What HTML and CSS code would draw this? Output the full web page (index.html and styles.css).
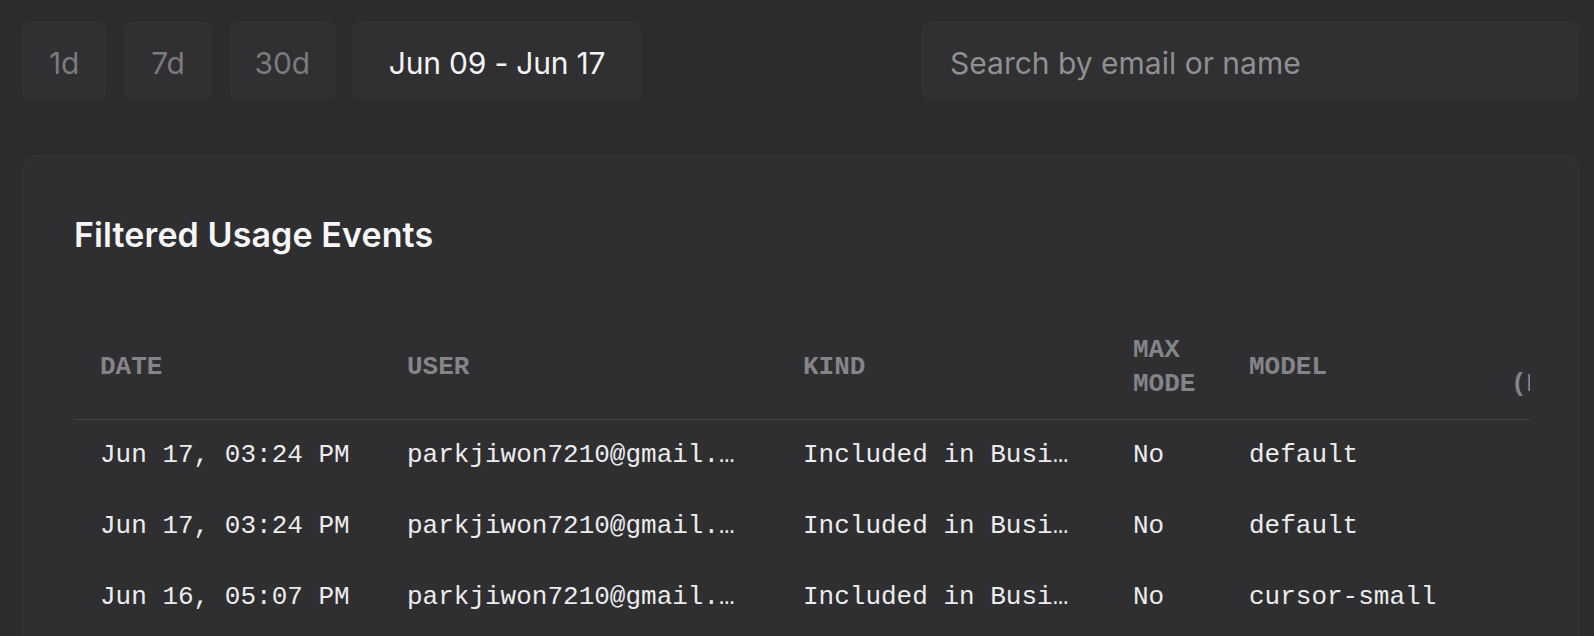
FILE: index.html
```html
<!DOCTYPE html>
<html lang="en">
<head>
<meta charset="utf-8">
<title>Usage</title>
<link rel="stylesheet" href="styles.css">
</head>
<body>
<div class="page">
  <div class="toolbar">
    <div class="ranges">
      <button class="chip">1d</button>
      <button class="chip">7d</button>
      <button class="chip">30d</button>
      <button class="chip chip-active">Jun 09 - Jun 17</button>
    </div>
    <input class="search" type="text" placeholder="Search by email or name">
  </div>

  <section class="card">
    <h2 class="card-title">Filtered Usage Events</h2>
    <div class="table-wrap">
      <table class="events">
        <colgroup>
          <col class="c-date"><col class="c-user"><col class="c-kind"><col class="c-max"><col class="c-model"><col class="c-cost">
        </colgroup>
        <thead>
          <tr>
            <th>Date</th>
            <th>User</th>
            <th>Kind</th>
            <th>Max Mode</th>
            <th>Model</th>
            <th class="num">Cost (Requests)</th>
          </tr>
        </thead>
        <tbody>
          <tr>
            <td>Jun 17, 03:24 PM</td>
            <td><span class="trunc">parkjiwon7210@gmail.com</span></td>
            <td><span class="trunc">Included in Business</span></td>
            <td>No</td>
            <td>default</td>
            <td class="num">1</td>
          </tr>
          <tr>
            <td>Jun 17, 03:24 PM</td>
            <td><span class="trunc">parkjiwon7210@gmail.com</span></td>
            <td><span class="trunc">Included in Business</span></td>
            <td>No</td>
            <td>default</td>
            <td class="num">1</td>
          </tr>
          <tr>
            <td>Jun 16, 05:07 PM</td>
            <td><span class="trunc">parkjiwon7210@gmail.com</span></td>
            <td><span class="trunc">Included in Business</span></td>
            <td>No</td>
            <td>cursor-small</td>
            <td class="num">0</td>
          </tr>
        </tbody>
      </table>
    </div>
  </section>
</div>
</body>
</html>
```
FILE: styles.css
```css
html, body {
  margin: 0;
  padding: 0;
  background: #2c2b2d;
  height: 100%;
  overflow: hidden;
}

body {
  font-family: Inter, "Liberation Sans", sans-serif;
  color: #f2f2f3;
}

.page {
  padding: 22px 15px 0 22px;
}

.toolbar {
  display: flex;
  justify-content: space-between;
  align-items: center;
  height: 78px;
}

.ranges {
  display: flex;
  gap: 18px;
  height: 100%;
}

.chip {
  height: 78px;
  padding: 3px 26px 0;
  background: #302f31;
  border: 1px solid #343335;
  border-radius: 8px;
  color: #7b7a7e;
  font-family: Inter, "Liberation Sans", sans-serif;
  font-size: 30px;
  font-weight: 400;
  letter-spacing: -0.2px;
  cursor: pointer;
}

.chip:nth-child(3) {
  padding: 3px 24px 0;
}

.chip-active {
  padding: 3px 35px 0;
  color: #f4f4f5;
}

.search {
  box-sizing: border-box;
  width: 657px;
  height: 78px;
  padding: 3px 27px 0;
  background: #302f31;
  border: 1px solid #343335;
  border-radius: 8px;
  color: #f4f4f5;
  font-family: Inter, "Liberation Sans", sans-serif;
  font-size: 30px;
  outline: none;
}

.search::placeholder {
  color: #908f93;
}

.card {
  margin-top: 55px;
  padding: 52px 48px 0 51px;
  height: 600px;
  background: #2f2e30;
  border: 1px solid #343335;
  border-radius: 14px;
}

.card-title {
  margin: 0;
  font-size: 34px;
  line-height: 54px;
  font-weight: 600;
  color: #f6f6f7;
  letter-spacing: 0.1px;
}

.table-wrap {
  margin-top: 53px;
  overflow: hidden;
}

.events {
  table-layout: fixed;
  border-collapse: collapse;
  width: 1629px;
  font-family: "Liberation Mono", "DejaVu Sans Mono", monospace;
  font-size: 26px;
}

.c-date { width: 307px; }
.c-user { width: 396px; }
.c-kind { width: 330px; }
.c-max { width: 116px; }
.c-model { width: 268px; }
.c-cost { width: 212px; }

.events th {
  padding: 18px 30px 18px 26px;
  line-height: 34px;
  text-align: left;
  font-weight: 700;
  text-transform: uppercase;
  color: #858488;
  vertical-align: middle;
  border-bottom: 1px solid #434245;
}

.events th.num {
  padding-left: 20px;
  padding-right: 36px;
}

.events td {
  padding: 18px 30px 18px 26px;
  line-height: 35px;
  color: #ececee;
  white-space: nowrap;
  vertical-align: middle;
}

.events .num {
  text-align: right;
}

.trunc {
  display: block;
  overflow: hidden;
  text-overflow: ellipsis;
  white-space: nowrap;
}
```
